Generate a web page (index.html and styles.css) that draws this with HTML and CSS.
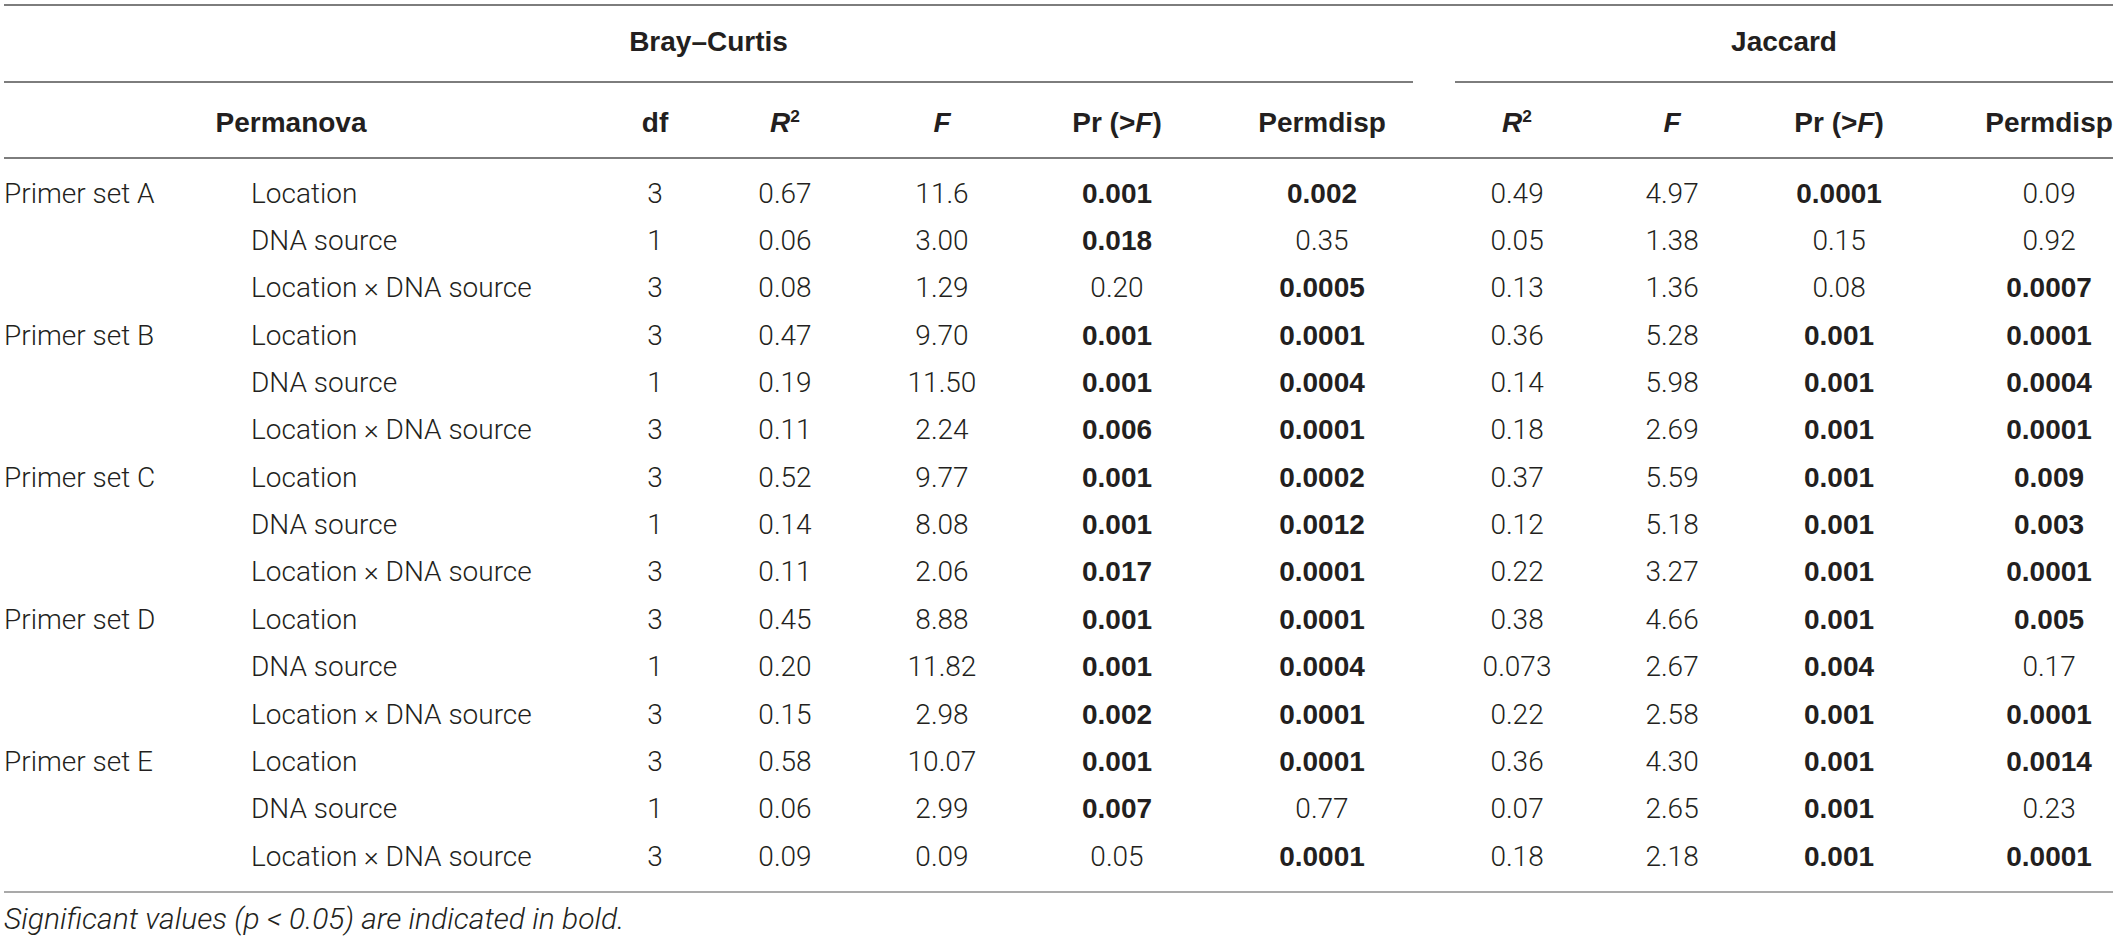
FILE: index.html
```html
<!DOCTYPE html>
<html lang="en">
<head>
    <meta charset="UTF-8">
    <meta name="viewport" content="width=device-width, initial-scale=1.0">
    <title>Permanova and Permdisp results</title>
    <link rel="stylesheet" href="styles.css">
</head>
<body>
    <table class="stats">
        <colgroup>
            <col class="c-group">
            <col class="c-term">
            <col class="c-df">
            <col class="c-r2">
            <col class="c-f">
            <col class="c-pr">
            <col class="c-pd">
            <col class="c-gap">
            <col class="c-r2j">
            <col class="c-fj">
            <col class="c-prj">
            <col class="c-pdj">
        </colgroup>
        <thead>
            <!-- distance measures -->
            <tr class="metric-row">
                <th colspan="7" class="metric">Bray–Curtis</th>
                <th class="gap"></th>
                <th colspan="4" class="metric">Jaccard</th>
            </tr>
            <tr class="head-row">
                <th colspan="2" class="permanova">Permanova</th>
                <th>df</th>
                <th><i>R</i><sup>2</sup></th>
                <th><i>F</i></th>
                <th>Pr (&gt;<i>F</i>)</th>
                <th>Permdisp</th>
                <th class="gap"></th>
                <th><i>R</i><sup>2</sup></th>
                <th><i>F</i></th>
                <th>Pr (&gt;<i>F</i>)</th>
                <th>Permdisp</th>
            </tr>
        </thead>
        <tbody>
            <!-- Primer set A -->
            <tr>
                <td class="group">Primer set A</td><td class="term">Location</td><td>3</td>
                <td>0.67</td><td>11.6</td><td><b>0.001</b></td><td><b>0.002</b></td><td></td>
                <td>0.49</td><td>4.97</td><td><b>0.0001</b></td><td>0.09</td>
            </tr>
            <tr>
                <td class="group"></td><td class="term">DNA source</td><td>1</td>
                <td>0.06</td><td>3.00</td><td><b>0.018</b></td><td>0.35</td><td></td>
                <td>0.05</td><td>1.38</td><td>0.15</td><td>0.92</td>
            </tr>
            <tr>
                <td class="group"></td><td class="term">Location × DNA source</td><td>3</td>
                <td>0.08</td><td>1.29</td><td>0.20</td><td><b>0.0005</b></td><td></td>
                <td>0.13</td><td>1.36</td><td>0.08</td><td><b>0.0007</b></td>
            </tr>
            <!-- Primer set B -->
            <tr>
                <td class="group">Primer set B</td><td class="term">Location</td><td>3</td>
                <td>0.47</td><td>9.70</td><td><b>0.001</b></td><td><b>0.0001</b></td><td></td>
                <td>0.36</td><td>5.28</td><td><b>0.001</b></td><td><b>0.0001</b></td>
            </tr>
            <tr>
                <td class="group"></td><td class="term">DNA source</td><td>1</td>
                <td>0.19</td><td>11.50</td><td><b>0.001</b></td><td><b>0.0004</b></td><td></td>
                <td>0.14</td><td>5.98</td><td><b>0.001</b></td><td><b>0.0004</b></td>
            </tr>
            <tr>
                <td class="group"></td><td class="term">Location × DNA source</td><td>3</td>
                <td>0.11</td><td>2.24</td><td><b>0.006</b></td><td><b>0.0001</b></td><td></td>
                <td>0.18</td><td>2.69</td><td><b>0.001</b></td><td><b>0.0001</b></td>
            </tr>
            <!-- Primer set C -->
            <tr>
                <td class="group">Primer set C</td><td class="term">Location</td><td>3</td>
                <td>0.52</td><td>9.77</td><td><b>0.001</b></td><td><b>0.0002</b></td><td></td>
                <td>0.37</td><td>5.59</td><td><b>0.001</b></td><td><b>0.009</b></td>
            </tr>
            <tr>
                <td class="group"></td><td class="term">DNA source</td><td>1</td>
                <td>0.14</td><td>8.08</td><td><b>0.001</b></td><td><b>0.0012</b></td><td></td>
                <td>0.12</td><td>5.18</td><td><b>0.001</b></td><td><b>0.003</b></td>
            </tr>
            <tr>
                <td class="group"></td><td class="term">Location × DNA source</td><td>3</td>
                <td>0.11</td><td>2.06</td><td><b>0.017</b></td><td><b>0.0001</b></td><td></td>
                <td>0.22</td><td>3.27</td><td><b>0.001</b></td><td><b>0.0001</b></td>
            </tr>
            <!-- Primer set D -->
            <tr>
                <td class="group">Primer set D</td><td class="term">Location</td><td>3</td>
                <td>0.45</td><td>8.88</td><td><b>0.001</b></td><td><b>0.0001</b></td><td></td>
                <td>0.38</td><td>4.66</td><td><b>0.001</b></td><td><b>0.005</b></td>
            </tr>
            <tr>
                <td class="group"></td><td class="term">DNA source</td><td>1</td>
                <td>0.20</td><td>11.82</td><td><b>0.001</b></td><td><b>0.0004</b></td><td></td>
                <td>0.073</td><td>2.67</td><td><b>0.004</b></td><td>0.17</td>
            </tr>
            <tr>
                <td class="group"></td><td class="term">Location × DNA source</td><td>3</td>
                <td>0.15</td><td>2.98</td><td><b>0.002</b></td><td><b>0.0001</b></td><td></td>
                <td>0.22</td><td>2.58</td><td><b>0.001</b></td><td><b>0.0001</b></td>
            </tr>
            <!-- Primer set E -->
            <tr>
                <td class="group">Primer set E</td><td class="term">Location</td><td>3</td>
                <td>0.58</td><td>10.07</td><td><b>0.001</b></td><td><b>0.0001</b></td><td></td>
                <td>0.36</td><td>4.30</td><td><b>0.001</b></td><td><b>0.0014</b></td>
            </tr>
            <tr>
                <td class="group"></td><td class="term">DNA source</td><td>1</td>
                <td>0.06</td><td>2.99</td><td><b>0.007</b></td><td>0.77</td><td></td>
                <td>0.07</td><td>2.65</td><td><b>0.001</b></td><td>0.23</td>
            </tr>
            <tr>
                <td class="group"></td><td class="term">Location × DNA source</td><td>3</td>
                <td>0.09</td><td>0.09</td><td>0.05</td><td><b>0.0001</b></td><td></td>
                <td>0.18</td><td>2.18</td><td><b>0.001</b></td><td><b>0.0001</b></td>
            </tr>
        </tbody>
    </table>

    <p class="note">Significant values (<span>p</span> &lt; 0.05) are indicated in bold.</p>
</body>
</html>
```

FILE: styles.css
```css
/* Halaman dasar */
body {
    margin: 0;
    padding: 4px 4px 0;
    background: #fff;
    color: #231f20;
    font-family: Roboto, "Liberation Sans", Arial, sans-serif;
    font-weight: 300;
    font-size: 28px;
}

/* Tabel utama */
.stats {
    width: 2109px;
    table-layout: fixed;
    border-collapse: collapse;
    border-top: 2px solid #7d7d7d;
}

.c-group { width: 246px; }
.c-term  { width: 371px; }
.c-df    { width: 68px; }
.c-r2    { width: 192px; }
.c-f     { width: 122px; }
.c-pr    { width: 228px; }
.c-pd    { width: 182px; }
.c-gap   { width: 42px; }
.c-r2j   { width: 124px; }
.c-fj    { width: 186px; }
.c-prj   { width: 148px; }
.c-pdj   { width: 200px; }

/* Header */
th {
    font-family: "Liberation Sans", Arial, sans-serif;
    font-weight: bold;
    font-size: 28px;
    text-align: center;
    white-space: nowrap;
    padding: 0;
    line-height: 33px;
}

th i {
    font-style: italic;
}

th sup {
    font-size: 0.62em;
    line-height: 0;
    vertical-align: 0.55em;
}

.metric-row th {
    padding: 19px 0 23px;
}

.metric {
    border-bottom: 2px solid #7d7d7d;
}

.head-row th {
    padding: 23px 0 18px;
    border-bottom: 2px solid #7d7d7d;
}

.permanova {
    padding-right: 43px !important;
}

/* Kolom terakhir sedikit bergeser ke kanan */
.head-row th:last-child,
tbody td:last-child {
    padding-left: 72px;
}

/* Isi tabel */
td {
    padding: 8px 0;
    height: 31.36px;
    line-height: 31.36px;
    text-align: center;
    white-space: nowrap;
    vertical-align: middle;
}

td b {
    font-family: "Liberation Sans", Arial, sans-serif;
    font-weight: bold;
    font-size: 28px;
    line-height: 0; /* jangan ikut memperbesar tinggi baris */
}

td.group,
td.term {
    text-align: left;
}

td.term {
    padding-left: 1px;
}

tbody tr:first-child td {
    padding-top: 18.6px;
}

tbody tr:last-child td {
    padding-bottom: 19px;
    border-bottom: 2px solid #a9a9a9;
}

/* Catatan bawah */
.note {
    margin: 9px 0 0;
    font-style: italic;
    font-size: 30px;
    line-height: 34px;
}
```
